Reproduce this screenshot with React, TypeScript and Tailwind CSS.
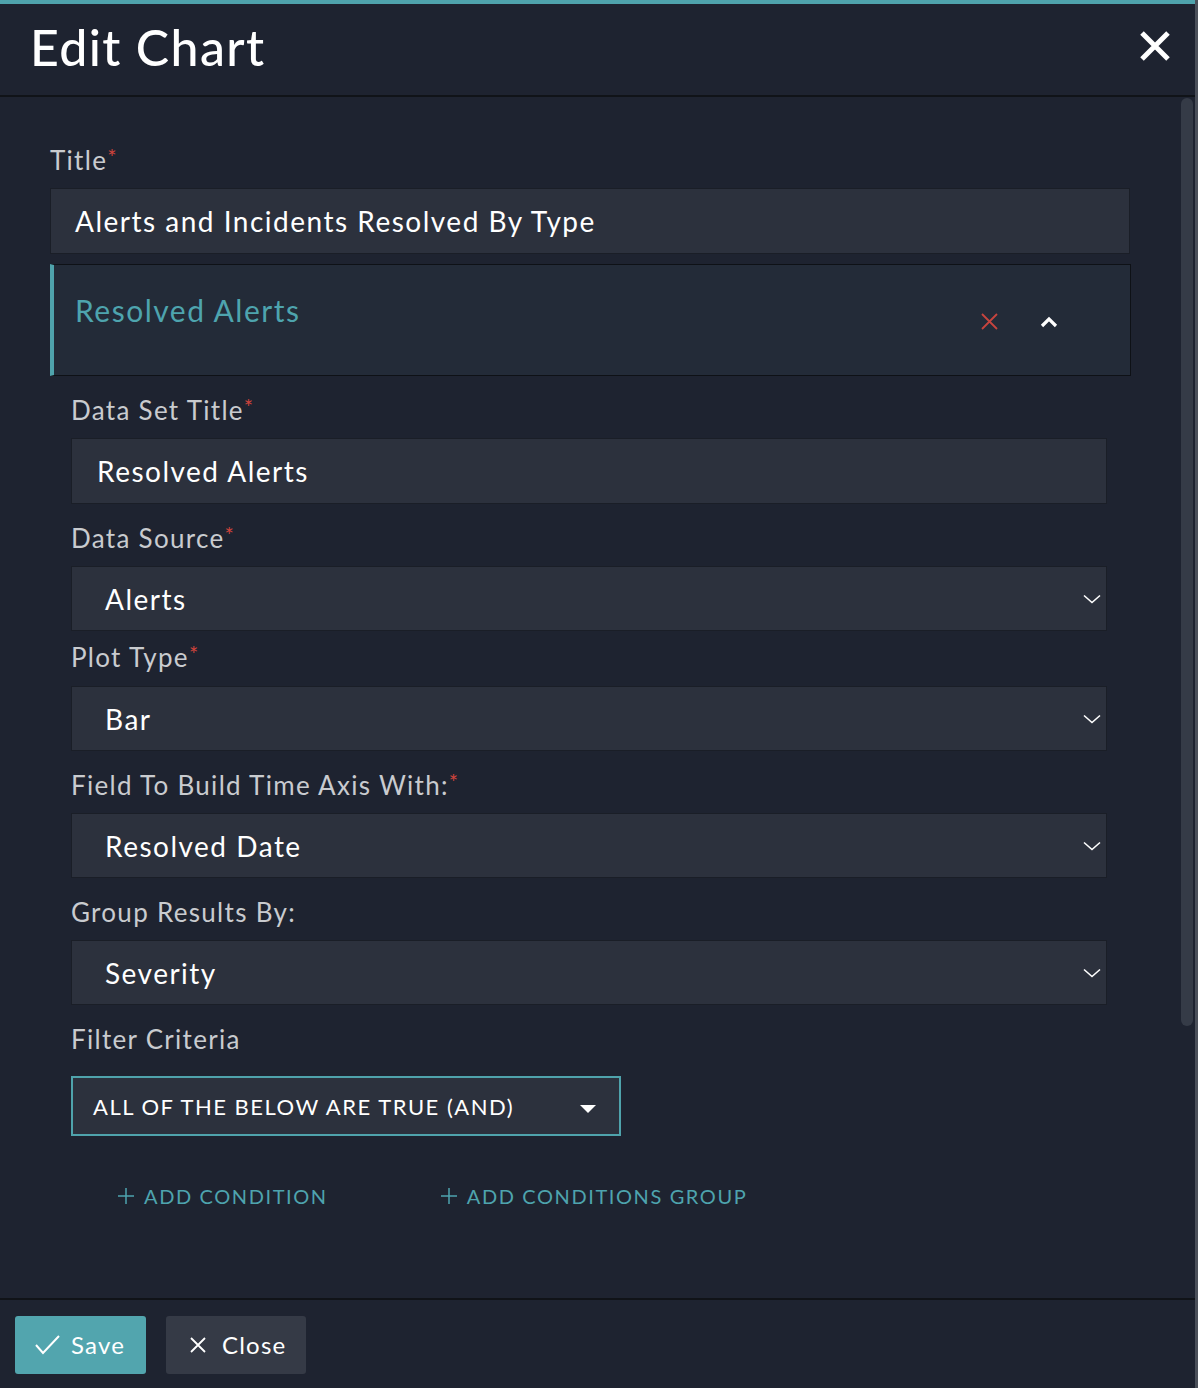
import React from "react";

const font = { fontFamily: "Lato, 'Noto Sans', sans-serif" };

function Chevron() {
  return (
    <svg width="18" height="10" viewBox="0 0 18 10" fill="none">
      <path d="M1 1.5 L9 8.5 L17 1.5" stroke="#ffffff" strokeWidth="1.6" />
    </svg>
  );
}

function Label({ text, required }: { text: string; required?: boolean }) {
  return (
    <div className="h-[28px] leading-[28px] text-[26px] text-[#c9cbcf] tracking-[1.3px]">
      {text}
      {required && <span className="text-[#d0433c] text-[22px] align-top leading-[22px] tracking-normal">*</span>}
    </div>
  );
}

function SelectBox({ value }: { value: string }) {
  return (
    <div className="h-[65px] w-[1036px] bg-[#2c313d] border border-[#1a1e27] flex items-center justify-between pl-[33px] pr-[5px]">
      <span className="text-[28px] text-white tracking-[1.5px]">{value}</span>
      <Chevron />
    </div>
  );
}

export default function App() {
  return (
    <div style={font} className="w-[1198px] h-[1388px] bg-[#1e2330] flex flex-col border-r-[3px] border-[#4b505a]">
      <div className="h-[4px] bg-[#4fa3ac]" />
      <div className="h-[93px] flex items-center justify-between pl-[30px] pr-[24px] border-b-2 border-[#101318]">
        <h1 className="text-[50px] text-white font-medium tracking-[1.4px] mt-[-4px]">Edit Chart</h1>
        <svg width="32" height="32" viewBox="0 0 32 32" className="mt-[-8px]">
          <path d="M3 3 L29 29 M29 3 L3 29" stroke="#ffffff" strokeWidth="5" />
        </svg>
      </div>

      <div className="flex flex-1 min-h-0">
        <div className="flex-1 pl-[50px] pt-[49px]">
          <Label text="Title" required />
          <div className="mt-[14px] h-[66px] w-[1080px] bg-[#2c313d] border border-[#1a1e27] flex items-center pl-[24px]">
            <span className="text-[28px] text-white tracking-[1.5px]">Alerts and Incidents Resolved By Type</span>
          </div>

          <div className="mt-[10px] h-[112px] w-[1081px] bg-[#232b38] border border-[#0e1116] border-l-[4px] border-l-[#4fa3ac] flex items-start justify-between pt-[23px] pl-[21px] pr-[72px]">
            <span className="text-[30px] text-[#4ea4ae] tracking-[1.5px]">Resolved Alerts</span>
            <div className="flex items-center gap-[42px] mt-[25px]">
              <svg width="17" height="17" viewBox="0 0 17 17">
                <path d="M1 1 L16 16 M16 1 L1 16" stroke="#c6443e" strokeWidth="1.8" />
              </svg>
              <svg width="18" height="12" viewBox="0 0 18 12">
                <path d="M2 10 L9 3 L16 10" stroke="#ffffff" strokeWidth="3.2" fill="none" />
              </svg>
            </div>
          </div>

          <div className="pl-[21px]">
            <div className="mt-[20px]">
              <Label text="Data Set Title" required />
            </div>
            <div className="mt-[14px] h-[66px] w-[1036px] bg-[#2c313d] border border-[#1a1e27] flex items-center pl-[25px]">
              <span className="text-[28px] text-white tracking-[1.5px]">Resolved Alerts</span>
            </div>

            <div className="mt-[20px]">
              <Label text="Data Source" required />
            </div>
            <div className="mt-[14px]">
              <SelectBox value="Alerts" />
            </div>

            <div className="mt-[12px]">
              <Label text="Plot Type" required />
            </div>
            <div className="mt-[15px]">
              <SelectBox value="Bar" />
            </div>

            <div className="mt-[20px]">
              <Label text="Field To Build Time Axis With:" required />
            </div>
            <div className="mt-[14px]">
              <SelectBox value="Resolved Date" />
            </div>

            <div className="mt-[20px]">
              <Label text="Group Results By:" />
            </div>
            <div className="mt-[14px]">
              <SelectBox value="Severity" />
            </div>

            <div className="mt-[20px]">
              <Label text="Filter Criteria" />
            </div>
            <div className="mt-[23px] h-[60px] w-[550px] bg-[#2c313d] border-2 border-[#4fa3ac] flex items-center justify-between pl-[20px] pr-[22px]">
              <span className="text-[22px] text-white tracking-[1.5px]">ALL OF THE BELOW ARE TRUE (AND)</span>
              <svg width="18" height="10" viewBox="0 0 18 10" className="mt-[6px]">
                <path d="M1 1 L17 1 L9 9 Z" fill="#ffffff" />
              </svg>
            </div>

            <div className="mt-[45px] flex items-center pl-[46px] text-[20px] text-[#4ea4ae] tracking-[1.6px]">
              <div className="flex items-center gap-[9px]">
                <svg width="18" height="18" viewBox="0 0 18 18">
                  <path d="M9 1 L9 17 M1 9 L17 9" stroke="#4ea4ae" strokeWidth="1.5" />
                </svg>
                <span>ADD CONDITION</span>
              </div>
              <div className="flex items-center gap-[9px] ml-[112px]">
                <svg width="18" height="18" viewBox="0 0 18 18">
                  <path d="M9 1 L9 17 M1 9 L17 9" stroke="#4ea4ae" strokeWidth="1.5" />
                </svg>
                <span>ADD CONDITIONS GROUP</span>
              </div>
            </div>
          </div>
        </div>
        <div className="w-[14px] pt-[1px] pr-[2px]">
          <div className="h-[928px] w-[12px] rounded-full bg-[#353b47]" />
        </div>
      </div>

      <div className="h-[90px] border-t-2 border-[#101318] flex items-start gap-[20px] pl-[15px] pt-[16px]">
        <button className="h-[58px] w-[131px] bg-[#52a5ae] rounded-[3px] flex items-center pl-[20px] gap-[11px] text-white text-[24px] tracking-[1.2px]">
          <svg width="25" height="20" viewBox="0 0 25 20">
            <path d="M1 10 L8 18 L24 1" stroke="#ffffff" strokeWidth="2" fill="none" />
          </svg>
          Save
        </button>
        <button className="h-[58px] w-[140px] bg-[#353a46] rounded-[3px] flex items-center pl-[24px] gap-[16px] text-white text-[24px] tracking-[1.2px]">
          <svg width="16" height="16" viewBox="0 0 16 16">
            <path d="M1 1 L15 15 M15 1 L1 15" stroke="#ffffff" strokeWidth="1.8" />
          </svg>
          Close
        </button>
      </div>
    </div>
  );
}
